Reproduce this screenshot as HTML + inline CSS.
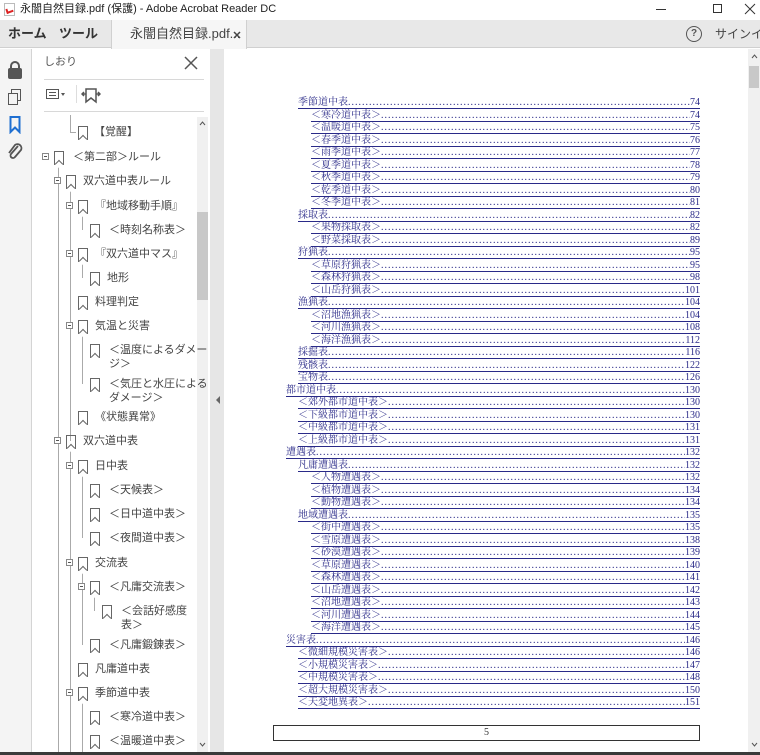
<!DOCTYPE html>
<html><head><meta charset="utf-8"><style>
*{margin:0;padding:0;box-sizing:border-box}
body{width:760px;height:755px;overflow:hidden;background:#fff;font-family:"Liberation Sans","Noto Sans CJK JP",sans-serif;position:relative}
.a{position:absolute}
.t{font-size:11px;color:#444;white-space:nowrap;line-height:14px}
.bm{position:absolute;width:10px;height:14px;border:1.5px solid #666;border-bottom:none}
.bm:after{content:"";position:absolute;left:1px;top:9px;width:5px;height:5px;background:#fff;border-left:1.5px solid #666;border-top:1.5px solid #666;transform:rotate(45deg)}
.ex{position:absolute;width:7px;height:7px;border:1px solid #888;background:#fff}
.ex:after{content:"";position:absolute;left:1px;top:2px;width:3px;height:1px;background:#555}
.vl{position:absolute;width:1px;background:#aaa}
.hl{position:absolute;height:1px;background:#aaa}
.r{position:absolute;display:flex;font-family:"Liberation Serif","Noto Serif CJK SC",serif;font-size:10px;line-height:11px;color:#2a2a88;border-bottom:1px solid #2a2a88;height:12px;right:60px;white-space:nowrap}
.r .d{flex:1;overflow:hidden;letter-spacing:1px}
.r .d:before{content:"........................................................................................................................................................................................................"}
</style></head><body>
<div class="a" style="left:0;top:0;width:760px;height:20px;background:#fff"></div>
<div class="a" style="left:4px;top:3px;width:11px;height:13px;background:#fff;border:1px solid #bbb"></div>
<div class="a" style="left:6px;top:8px;width:7px;height:5px;border-left:2px solid #d22;border-bottom:2px solid #d22;transform:rotate(-20deg)"></div>
<div class="a t" style="left:20px;top:2px;font-size:11px;color:#222">永闇自然目録.pdf (保護) - Adobe Acrobat Reader DC</div>
<div class="a" style="left:656px;top:9px;width:10px;height:1px;background:#333"></div>
<div class="a" style="left:713px;top:4px;width:9px;height:9px;border:1px solid #333"></div>
<svg class="a" style="left:744px;top:3px" width="12" height="12"><path d="M1 1L11 11M11 1L1 11" stroke="#333" stroke-width="1"/></svg>
<div class="a" style="left:0;top:20px;width:760px;height:28px;background:#e8e8e8;border-bottom:1px solid #d0d0d0"></div>
<div class="a t" style="left:8px;top:27px;font-size:13px;font-weight:bold;color:#333">ホーム</div>
<div class="a t" style="left:59px;top:27px;font-size:13px;font-weight:bold;color:#333">ツール</div>
<div class="a" style="left:111px;top:20px;width:136px;height:29px;background:#f6f6f6;border-left:1px solid #d0d0d0;border-right:1px solid #d0d0d0"></div>
<div class="a t" style="left:130px;top:27px;font-size:13px;color:#444">永闇自然目録.pdf...</div>
<svg class="a" style="left:233px;top:31px" width="8" height="8"><path d="M1 1L7 7M7 1L1 7" stroke="#444" stroke-width="1.5"/></svg>
<div class="a" style="left:686px;top:26px;width:16px;height:16px;border:1.5px solid #555;border-radius:50%;font-size:10px;font-weight:bold;color:#555;text-align:center;line-height:13px">?</div>
<div class="a t" style="left:715px;top:27px;font-size:12px;color:#444">サインイン</div>
<div class="a" style="left:0;top:49px;width:32px;height:703px;background:#f4f4f4;border-right:1px solid #d4d4d4"></div>
<div class="a" style="left:8px;top:68px;width:14px;height:11px;background:#555;border-radius:2px"></div>
<div class="a" style="left:10px;top:61px;width:10px;height:10px;border:2px solid #555;border-bottom:none;border-radius:5px 5px 0 0"></div>
<div class="a" style="left:11px;top:89px;width:10px;height:12px;border:1.5px solid #555;background:#f4f4f4"></div>
<div class="a" style="left:8px;top:93px;width:10px;height:12px;border:1.5px solid #555;background:#f4f4f4"></div>
<svg class="a" style="left:9px;top:116px" width="12" height="18"><path d="M1.5 1H10.5V16L6 11.5L1.5 16Z" fill="none" stroke="#1f6fd1" stroke-width="2"/></svg>
<svg class="a" style="left:7px;top:143px" width="16" height="18"><path d="M11 3L4 11a2.5 2.5 0 0 0 4 3l6-7a4 4 0 0 0-6-5L2 10" fill="none" stroke="#555" stroke-width="1.8"/></svg>
<div class="a" style="left:33px;top:49px;width:177px;height:703px;background:#fff"></div>
<div class="a t" style="left:44px;top:55px;font-size:11px;color:#555">しおり</div>
<svg class="a" style="left:184px;top:56px" width="14" height="14"><path d="M1 1L13 13M13 1L1 13" stroke="#555" stroke-width="1.5"/></svg>
<div class="a" style="left:44px;top:79px;width:160px;height:1px;background:#d8d8d8"></div>
<div class="a" style="left:46px;top:89px;width:13px;height:10px;border:1.5px solid #555"></div>
<div class="a" style="left:49px;top:92px;width:7px;height:1px;background:#555;box-shadow:0 3px 0 #555"></div>
<div class="a" style="left:61px;top:93px;width:0;height:0;border-top:3px solid #555;border-left:2px solid transparent;border-right:2px solid transparent"></div>
<div class="a" style="left:76px;top:85px;width:1px;height:18px;background:#ddd"></div>
<svg class="a" style="left:81px;top:85px" width="20" height="20"><path d="M5 4H15V17L10 13L5 17Z M1 9H5 M15 9H19 M3 7L1 9L3 11 M17 7L19 9L17 11" fill="none" stroke="#555" stroke-width="1.5"/></svg>
<div class="a" style="left:44px;top:111px;width:160px;height:1px;background:#d8d8d8"></div>
<div class="a" style="left:197px;top:117px;width:11px;height:635px;background:#f0f0f0"></div>
<div class="a" style="left:197px;top:212px;width:11px;height:88px;background:#c8c8c8"></div>
<svg class="a" style="left:199px;top:121px" width="7" height="5"><path d="M1 4L3.5 1L6 4" fill="none" stroke="#555"/></svg>
<svg class="a" style="left:199px;top:742px" width="7" height="5"><path d="M1 1L3.5 4L6 1" fill="none" stroke="#555"/></svg>
<div class="vl" style="left:58px;top:164px;height:588px"></div>
<div class="vl" style="left:70px;top:115px;height:17px"></div>
<div class="hl" style="left:70px;top:132px;width:6px"></div>
<div class="vl" style="left:70px;top:188px;height:253px"></div>
<div class="vl" style="left:70px;top:448px;height:304px"></div>
<div class="vl" style="left:82px;top:213px;height:17px"></div>
<div class="vl" style="left:82px;top:261px;height:17px"></div>
<div class="vl" style="left:82px;top:333px;height:51px"></div>
<div class="vl" style="left:82px;top:473px;height:65px"></div>
<div class="vl" style="left:82px;top:570px;height:75px"></div>
<div class="vl" style="left:82px;top:700px;height:52px"></div>
<div class="vl" style="left:94px;top:594px;height:17px"></div>

<div class="bm" style="left:78px;top:126px"></div><div class="a t" style="left:94px;top:125px">【覚醒】</div>
<div class="ex" style="left:42px;top:153px"></div><div class="bm" style="left:54px;top:151px"></div><div class="a t" style="left:73px;top:150px">＜第二部＞ルール</div>
<div class="ex" style="left:54px;top:177px"></div><div class="bm" style="left:66px;top:175px"></div><div class="a t" style="left:83px;top:174px">双六道中表ルール</div>
<div class="ex" style="left:66px;top:202px"></div><div class="bm" style="left:78px;top:200px"></div><div class="a t" style="left:95px;top:199px">『地域移動手順』</div>
<div class="bm" style="left:90px;top:224px"></div><div class="a t" style="left:109px;top:223px">＜時刻名称表＞</div>
<div class="ex" style="left:66px;top:250px"></div><div class="bm" style="left:78px;top:248px"></div><div class="a t" style="left:95px;top:247px">『双六道中マス』</div>
<div class="bm" style="left:90px;top:272px"></div><div class="a t" style="left:107px;top:271px">地形</div>
<div class="bm" style="left:78px;top:296px"></div><div class="a t" style="left:95px;top:295px">料理判定</div>
<div class="ex" style="left:66px;top:322px"></div><div class="bm" style="left:78px;top:320px"></div><div class="a t" style="left:95px;top:319px">気温と災害</div>
<div class="bm" style="left:90px;top:344px"></div><div class="a t" style="left:109px;top:343px">＜温度によるダメー<br>ジ＞</div>
<div class="bm" style="left:90px;top:378px"></div><div class="a t" style="left:109px;top:377px">＜気圧と水圧による<br>ダメージ＞</div>
<div class="bm" style="left:78px;top:411px"></div><div class="a t" style="left:95px;top:410px">《状態異常》</div>
<div class="ex" style="left:54px;top:437px"></div><div class="bm" style="left:66px;top:435px"></div><div class="a t" style="left:83px;top:434px">双六道中表</div>
<div class="ex" style="left:66px;top:462px"></div><div class="bm" style="left:78px;top:460px"></div><div class="a t" style="left:95px;top:459px">日中表</div>
<div class="bm" style="left:90px;top:484px"></div><div class="a t" style="left:109px;top:483px">＜天候表＞</div>
<div class="bm" style="left:90px;top:508px"></div><div class="a t" style="left:109px;top:507px">＜日中道中表＞</div>
<div class="bm" style="left:90px;top:532px"></div><div class="a t" style="left:109px;top:531px">＜夜間道中表＞</div>
<div class="ex" style="left:66px;top:559px"></div><div class="bm" style="left:78px;top:557px"></div><div class="a t" style="left:95px;top:556px">交流表</div>
<div class="ex" style="left:78px;top:583px"></div><div class="bm" style="left:90px;top:581px"></div><div class="a t" style="left:109px;top:580px">＜凡庸交流表＞</div>
<div class="bm" style="left:102px;top:605px"></div><div class="a t" style="left:121px;top:604px">＜会話好感度<br>表＞</div>
<div class="bm" style="left:90px;top:639px"></div><div class="a t" style="left:109px;top:638px">＜凡庸鍛錬表＞</div>
<div class="bm" style="left:78px;top:663px"></div><div class="a t" style="left:95px;top:662px">凡庸道中表</div>
<div class="ex" style="left:66px;top:689px"></div><div class="bm" style="left:78px;top:687px"></div><div class="a t" style="left:95px;top:686px">季節道中表</div>
<div class="bm" style="left:90px;top:711px"></div><div class="a t" style="left:109px;top:710px">＜寒冷道中表＞</div>
<div class="bm" style="left:90px;top:735px"></div><div class="a t" style="left:109px;top:734px">＜温暖道中表＞</div>

<div class="a" style="left:210px;top:49px;width:14px;height:703px;background:#e6e6e6"></div>
<div class="a" style="left:216px;top:396px;width:0;height:0;border-right:4px solid #666;border-top:4px solid transparent;border-bottom:4px solid transparent"></div>
<div class="a" style="left:748px;top:49px;width:12px;height:703px;background:#f0f0f0"></div>
<div class="a" style="left:749px;top:66px;width:10px;height:22px;background:#c8c8c8"></div>
<svg class="a" style="left:751px;top:54px" width="7" height="5"><path d="M1 4L3.5 1L6 4" fill="none" stroke="#555"/></svg>
<svg class="a" style="left:751px;top:742px" width="7" height="5"><path d="M1 1L3.5 4L6 1" fill="none" stroke="#555"/></svg>
<div class="a" style="left:0;top:752px;width:760px;height:3px;background:#3a3a3a"></div>

<div class="r" style="left:298px;top:97px"><span>季節道中表</span><span class="d"></span><span>74</span></div>
<div class="r" style="left:311px;top:109.5px"><span>＜寒冷道中表＞</span><span class="d"></span><span>74</span></div>
<div class="r" style="left:311px;top:122px"><span>＜温暖道中表＞</span><span class="d"></span><span>75</span></div>
<div class="r" style="left:311px;top:134.5px"><span>＜春季道中表＞</span><span class="d"></span><span>76</span></div>
<div class="r" style="left:311px;top:147px"><span>＜雨季道中表＞</span><span class="d"></span><span>77</span></div>
<div class="r" style="left:311px;top:159.5px"><span>＜夏季道中表＞</span><span class="d"></span><span>78</span></div>
<div class="r" style="left:311px;top:172px"><span>＜秋季道中表＞</span><span class="d"></span><span>79</span></div>
<div class="r" style="left:311px;top:184.5px"><span>＜乾季道中表＞</span><span class="d"></span><span>80</span></div>
<div class="r" style="left:311px;top:197px"><span>＜冬季道中表＞</span><span class="d"></span><span>81</span></div>
<div class="r" style="left:298px;top:209.5px"><span>採取表</span><span class="d"></span><span>82</span></div>
<div class="r" style="left:311px;top:222px"><span>＜果物採取表＞</span><span class="d"></span><span>82</span></div>
<div class="r" style="left:311px;top:234.5px"><span>＜野菜採取表＞</span><span class="d"></span><span>89</span></div>
<div class="r" style="left:298px;top:247px"><span>狩猟表</span><span class="d"></span><span>95</span></div>
<div class="r" style="left:311px;top:259.5px"><span>＜草原狩猟表＞</span><span class="d"></span><span>95</span></div>
<div class="r" style="left:311px;top:272px"><span>＜森林狩猟表＞</span><span class="d"></span><span>98</span></div>
<div class="r" style="left:311px;top:284.5px"><span>＜山岳狩猟表＞</span><span class="d"></span><span>101</span></div>
<div class="r" style="left:298px;top:297px"><span>漁猟表</span><span class="d"></span><span>104</span></div>
<div class="r" style="left:311px;top:309.5px"><span>＜沼地漁猟表＞</span><span class="d"></span><span>104</span></div>
<div class="r" style="left:311px;top:322px"><span>＜河川漁猟表＞</span><span class="d"></span><span>108</span></div>
<div class="r" style="left:311px;top:334.5px"><span>＜海洋漁猟表＞</span><span class="d"></span><span>112</span></div>
<div class="r" style="left:298px;top:347px"><span>採掘表</span><span class="d"></span><span>116</span></div>
<div class="r" style="left:298px;top:359.5px"><span>残骸表</span><span class="d"></span><span>122</span></div>
<div class="r" style="left:298px;top:372px"><span>宝物表</span><span class="d"></span><span>126</span></div>
<div class="r" style="left:286px;top:384.5px"><span>都市道中表</span><span class="d"></span><span>130</span></div>
<div class="r" style="left:298px;top:397px"><span>＜郊外都市道中表＞</span><span class="d"></span><span>130</span></div>
<div class="r" style="left:298px;top:409.5px"><span>＜下級都市道中表＞</span><span class="d"></span><span>130</span></div>
<div class="r" style="left:298px;top:422px"><span>＜中級都市道中表＞</span><span class="d"></span><span>131</span></div>
<div class="r" style="left:298px;top:434.5px"><span>＜上級都市道中表＞</span><span class="d"></span><span>131</span></div>
<div class="r" style="left:286px;top:447px"><span>遭遇表</span><span class="d"></span><span>132</span></div>
<div class="r" style="left:298px;top:459.5px"><span>凡庸遭遇表</span><span class="d"></span><span>132</span></div>
<div class="r" style="left:311px;top:472px"><span>＜人物遭遇表＞</span><span class="d"></span><span>132</span></div>
<div class="r" style="left:311px;top:484.5px"><span>＜植物遭遇表＞</span><span class="d"></span><span>134</span></div>
<div class="r" style="left:311px;top:497px"><span>＜動物遭遇表＞</span><span class="d"></span><span>134</span></div>
<div class="r" style="left:298px;top:509.5px"><span>地域遭遇表</span><span class="d"></span><span>135</span></div>
<div class="r" style="left:311px;top:522px"><span>＜街中遭遇表＞</span><span class="d"></span><span>135</span></div>
<div class="r" style="left:311px;top:534.5px"><span>＜雪原遭遇表＞</span><span class="d"></span><span>138</span></div>
<div class="r" style="left:311px;top:547px"><span>＜砂漠遭遇表＞</span><span class="d"></span><span>139</span></div>
<div class="r" style="left:311px;top:559.5px"><span>＜草原遭遇表＞</span><span class="d"></span><span>140</span></div>
<div class="r" style="left:311px;top:572px"><span>＜森林遭遇表＞</span><span class="d"></span><span>141</span></div>
<div class="r" style="left:311px;top:584.5px"><span>＜山岳遭遇表＞</span><span class="d"></span><span>142</span></div>
<div class="r" style="left:311px;top:597px"><span>＜沼地遭遇表＞</span><span class="d"></span><span>143</span></div>
<div class="r" style="left:311px;top:609.5px"><span>＜河川遭遇表＞</span><span class="d"></span><span>144</span></div>
<div class="r" style="left:311px;top:622px"><span>＜海洋遭遇表＞</span><span class="d"></span><span>145</span></div>
<div class="r" style="left:286px;top:634.5px"><span>災害表</span><span class="d"></span><span>146</span></div>
<div class="r" style="left:298px;top:647px"><span>＜微細規模災害表＞</span><span class="d"></span><span>146</span></div>
<div class="r" style="left:298px;top:659.5px"><span>＜小規模災害表＞</span><span class="d"></span><span>147</span></div>
<div class="r" style="left:298px;top:672px"><span>＜中規模災害表＞</span><span class="d"></span><span>148</span></div>
<div class="r" style="left:298px;top:684.5px"><span>＜超大規模災害表＞</span><span class="d"></span><span>150</span></div>
<div class="r" style="left:298px;top:697px"><span>＜天変地異表＞</span><span class="d"></span><span>151</span></div>
<div class="a" style="left:273px;top:725px;width:427px;height:16px;border:1px solid #333;text-align:center;font-family:'Liberation Serif',serif;font-size:10px;line-height:14px;color:#333">5</div>
</body></html>
